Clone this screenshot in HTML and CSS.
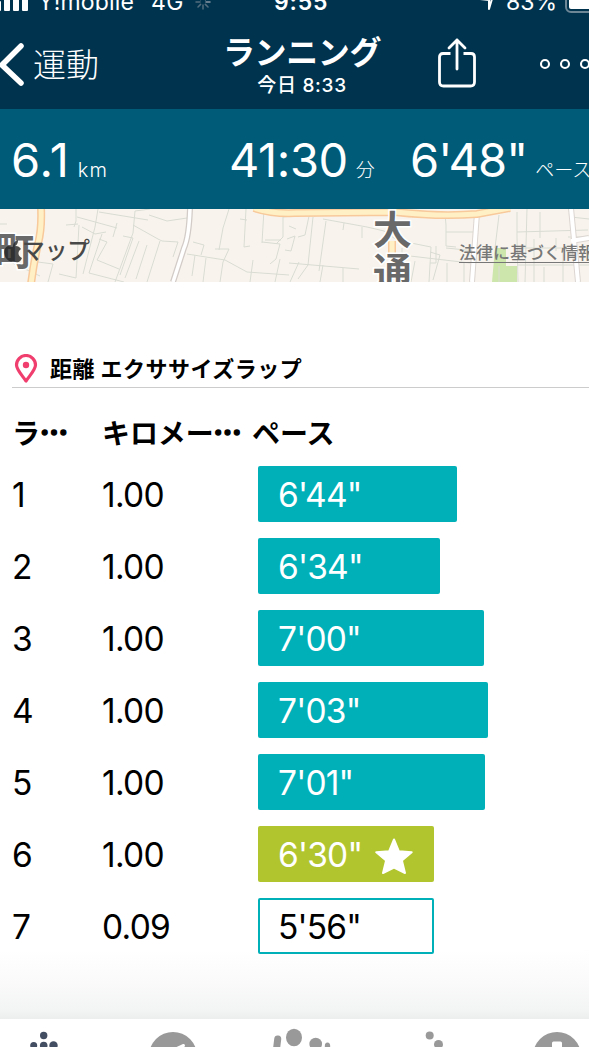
FILE: index.html
```html
<!DOCTYPE html>
<html lang="ja">
<head>
<meta charset="utf-8">
<title>ランニング</title>
<link rel="stylesheet" href="styles.css">
</head>
<body>
<div class="screen">
  <header class="top">
    <div class="status">
      <svg class="signal" width="30" height="24" viewBox="0 0 30 24" fill="#fff"><rect x="-4" y="13" width="5" height="10" rx="1"/><rect x="4" y="6" width="6" height="17" rx="1"/><rect x="13" y="3" width="6" height="20" rx="1"/><rect x="22" y="0" width="6" height="23" rx="1"/></svg>
      <span class="carrier">Y!mobile</span>
      <span class="network">4G</span>
      <svg class="spinner" width="16" height="16" viewBox="0 0 16 16" fill="none" stroke-width="1.5" stroke-linecap="round"><path stroke="#8797a3" d="M8 1v4M13 3l-2.6 2.6M15 8h-4"/><path stroke="#526d7e" d="M13 13l-2.6-2.6M8 15v-4M3 13l2.6-2.6M1 8h4M3 3l2.6 2.6"/></svg>
      <span class="clock">9:55</span>
      <svg class="location" width="18" height="22" viewBox="0 0 18 22" fill="none" stroke="#fff" stroke-width="2" stroke-linejoin="round"><path d="M15 3 1 10l9 1v9z"/></svg>
      <span class="percent">83%</span>
      <span class="battery"></span>
    </div>
    <nav class="nav">
      <svg class="back" width="25" height="44" viewBox="0 0 25 44" fill="none" stroke="#fff" stroke-width="5.5" stroke-linecap="round"><path d="M21 3 2 22 21 40"/></svg>
      <span class="back-label">運動</span>
      <div class="heading"><h1 class="title">ランニング</h1><p class="date">今日 8:33</p></div>
      <svg class="share" width="40" height="50" viewBox="0 0 40 50" fill="none" stroke="#fff" stroke-width="2.8" stroke-linecap="round" stroke-linejoin="round"><path stroke-linecap="butt" d="M13.500 15.500H6Q2.500 15.500 2.500 19V44Q2.500 48 6.500 48H33.500Q37.500 48 37.500 44V19Q37.500 15.500 34 15.500H26.500"/><path d="M20 31V2M12 10l8-8 8 8"/></svg>
      <svg class="more" width="51" height="14" viewBox="0 0 51 14" fill="none" stroke="#fff" stroke-width="2.100"><circle cx="7" cy="7" r="4"/><circle cx="27" cy="7" r="4"/><circle cx="47" cy="7" r="4"/></svg>
    </nav>
  </header>
  <section class="stats">
    <div class="stat stat-distance"><span class="value">6.1</span><span class="unit">km</span></div>
    <div class="stat stat-time"><span class="value">41:30</span><span class="unit">分</span></div>
    <div class="stat stat-pace"><span class="value">6'48"</span><span class="unit">ペース</span></div>
  </section>
  <svg class="map" width="589" height="73" viewBox="0 0 589 73">
    <rect width="589" height="73" fill="#f8f4ed"/>
    <path fill="#cde6ac" d="M495 39h11v18h11v16h-25z"/>
    <g class="lanes">
      <path d="M76 0v12l-2 6M98 0l-3 18-12 47M77 8l40 11M99 3l49 8M150 0l-15 2-2 22-18 49M133 16l25 14 4 2 16 1-5 15M117 14l-4 14M66 16l12-1M82 18l13 7 11-2M79 16l-3 53-17-4M99 30l8 3-10 18 22 9M123 27l10 2-13 37M139 32l-14 37M147 36l-11 34M160 32l-13 41M102 25l-13 39 35 9M149 6l18 6 20-3M187 45l38 6 22 12 42 3M193 33l11 3-3 10M195 46l-3 21M206 49l-3 24M215 40h14l-6 13-3 20M229 0l-6 19-4 22M246 0l-2 38 6-1M240 10l7 1M264 0l-2 34M265 31h16M262 33l18 2-4 15-6 5M283 8v20l-7 7M283 8l18-2M287 30l8-3-4 15-6-1M253 51l-3 22M280 50l-5 23M299 53l-9 20M0 15h7M8 52l32 15M38 53l15 2-5 18"/>
      <path d="M309 7l-4 19-7 2M313 8l-5 48-10 14M323 10l44 8 17 4 17 12M326 12l-7 50M344 14l-1 7M362 18v11M289 17l7 3M411 34l20 4-2 35M436 37v17h-6M430 43l10 3-7 25M445 4l1 12v21l10 1M446 23h31M446 39l30 3M499 6l-4 33M517 3v25l1 45M527 0l-2 73M517 23l71-2M540 3v26M518 39h49M518 56h71M534 30v43M544 58v15M556 29v13M568 28h21M563 40v33M571 8l18 2M578 53v20M289 54l70 6M323 56l-3 17M343 59v14M402 39v34M410 47l60 7M415 52l-4 21M447 54v19M464 54v19M499 57v16"/>
    </g>
    <g fill="none">
      <path stroke="#d2cbc7" stroke-width="6" d="M190-1Q189 28 184 39L173 73"/><path stroke="#fff" stroke-width="3.500" d="M190-1Q189 28 184 39L173 73"/>
      <path stroke="#dcd5d1" stroke-width="6" d="M477 4 472 73M571-1l7 74M571 32l18-3"/><path stroke="#fff" stroke-width="4" d="M477 4 472 73M571-1l7 74M571 32l18-3"/>
      <path stroke="#f8c99b" stroke-width="8" d="M41-2Q42 20 38 35 34 52 31 75M254-1Q272 5 295 4L395 3 Q440 8 477 5L510-1M392 32v15"/><path stroke="#fff0c5" stroke-width="5" d="M41-2Q42 20 38 35 34 52 31 75M254-1Q272 5 295 4L395 3 Q440 8 477 5L510-1M392 32v15"/>
    </g>
    <text class="town" x="-5" y="56">町</text>
    <text class="street" x="373" y="35">大</text>
    <text class="street" x="373" y="77">通</text>
    <g fill="#222" fill-opacity=".8"><path d="M18 31c0 4-2 6-5 7 0-4 2-6 5-7z"/><path d="M12 38c4-2 7-1 9 2-4 3-3 7 1 9-2 5-5 5-9 3-7 3-13-12-5-15 2 0 3 1 4 1z"/></g>
    <text class="provider" x="22" y="50" textLength="68" lengthAdjust="spacingAndGlyphs">マップ</text>
    <text class="legal" x="459" y="50">法律に基づく情報</text><path stroke="#777" d="M459 53.500H589"/>
  </svg>
  <main class="laps">
    <div class="section-title">
      <svg width="24" height="30" viewBox="0 0 24 30"><path fill="none" stroke="#f03f6e" stroke-width="3.200" stroke-linejoin="round" d="M12 27C7 20 2.500 15.500 2.500 11a9.500 9.500 0 0 1 19 0C21.500 15.500 17 20 12 27z"/><circle cx="12" cy="11" r="3.200" fill="#f03f6e"/></svg>
      <h2>距離 エクササイズラップ</h2>
    </div>
    <div class="row columns"><span>ラ<i class="dots">…</i></span><span>キロメー<i class="dots">…</i></span><span class="pace-label">ペース</span></div>
    <div class="row"><span>1</span><span>1.00</span><span class="bar" style="width:199px">6'44"</span></div>
    <div class="row"><span>2</span><span>1.00</span><span class="bar" style="width:182px">6'34"</span></div>
    <div class="row"><span>3</span><span>1.00</span><span class="bar" style="width:226px">7'00"</span></div>
    <div class="row"><span>4</span><span>1.00</span><span class="bar" style="width:230px">7'03"</span></div>
    <div class="row"><span>5</span><span>1.00</span><span class="bar" style="width:227px">7'01"</span></div>
    <div class="row"><span>6</span><span>1.00</span><span class="bar best" style="width:176px">6'30"<svg class="star" width="38" height="36" viewBox="0 0 38 36"><path fill="#fff" stroke="#fff" stroke-width="2" stroke-linejoin="round" d="M19 1.500 23.800 13.200 36.700 14.200 26.900 22.500 30 35 19 29.500 8 35 11.100 22.500 1.300 14.200 14.200 13.200z"/></svg></span></div>
    <div class="row"><span>7</span><span>0.09</span><span class="bar partial" style="width:176px">5'56"</span></div>
  </main>
  <footer class="tabs">
    <svg width="589" height="28" viewBox="0 0 589 28" fill="#999">
      <g fill="#434e62"><circle cx="43.700" cy="16.500" r="3.700"/><circle cx="33.700" cy="26.500" r="3.500"/><circle cx="43.700" cy="26.500" r="3.800"/><circle cx="53.500" cy="26.500" r="4.200"/></g>
      <circle cx="173" cy="37" r="24"/><path fill="#fff" d="M168 32l15-7q2-.500 2 1.500L180 39z"/>
      <rect x="273.500" y="16.500" width="7" height="20" rx="3.500" transform="rotate(7 277 26)"/><ellipse cx="294" cy="18.500" rx="8" ry="8.800"/><circle cx="315.700" cy="25" r="6.300"/><ellipse cx="327.500" cy="27" rx="2.700" ry="3.500"/>
      <circle cx="429.700" cy="16.500" r="4"/><circle cx="438.500" cy="25.500" r="4.500"/>
      <circle cx="557" cy="37" r="24"/><rect x="552" y="22.500" width="10" height="29" rx="1.500" fill="#fff"/>
    </svg>
  </footer>
</div>
</body>
</html>
```

FILE: styles.css
```css
* { box-sizing: border-box; }
body { margin: 0; overflow: hidden; }
h1, h2, p { margin: 0; }
.screen { width: 589px; height: 1047px; overflow: hidden; display: flex; flex-direction: column; background: #fff; font-family: Inter, "Noto Sans CJK JP", sans-serif; color: #000; }
.top { height: 109px; flex: none; background: #00334e; color: #fff; overflow: hidden; }
.status { height: 28px; margin-top: -12px; display: flex; align-items: center; font-size: 23px; line-height: 28px; white-space: nowrap; }
.status > * { flex: none; }
.signal { align-self: flex-start; }
.carrier { width: 107px; padding-left: 8px; letter-spacing: .15px; }
.network { width: 58px; padding-left: 14px; letter-spacing: .5px; }
.spinner { margin: 0 63px 0 0; }
.clock { width: 205px; font-weight: 600; letter-spacing: .8px; }
.location { margin-bottom: 5px; }
.percent { width: 59px; margin-left: 9px; }
.battery { width: 53px; height: 26px; margin-bottom: 5px; border: 2px solid #6d8796; border-radius: 6px; background: #fff content-box; padding: 2px; }
.nav { height: 93px; display: flex; align-items: flex-start; white-space: nowrap; }
.back { flex: none; margin-top: 27px; }
.back-label { width: 198px; padding: 23px 0 0 8px; font: 300 33px/48px "Noto Sans CJK JP", sans-serif; }
.heading { width: 158px; padding-top: 12px; text-align: center; }
.title { font: 700 32px/44px "Noto Sans CJK JP", sans-serif; letter-spacing: -.4px; }
.date { padding-top: 2px; font-size: 19px; line-height: 24px; font-weight: 500; letter-spacing: .7px; }
.share { flex: none; margin: 22px 0 0 56px; }
.more { flex: none; margin: 41px 0 0 61px; }
.stats { height: 100px; flex: none; display: grid; grid-template-columns: 218px 181px 190px; background: #005b78; color: #fff; white-space: nowrap; overflow: hidden; }
.stat { display: flex; align-items: baseline; padding: 22px 0 0 11px; }
.value { font-size: 47px; line-height: 58px; font-weight: 400; letter-spacing: -.4px; }
.stat-distance .value { letter-spacing: .9px; }
.unit { font: 300 19px/24px Inter, "Noto Sans CJK JP", sans-serif; margin-left: 8px; }
.stat-pace .value { letter-spacing: -.9px; }
.stat-distance .unit { font-size: 20px; letter-spacing: 1px; }
.map { display: block; flex: none; }
.lanes path { fill: none; stroke: #d9dcd3; stroke-width: 1; }
.map text { font-family: "Noto Sans CJK JP", sans-serif; }
.town, .street { font-size: 39px; font-weight: 700; fill: #696969; stroke: #fff; stroke-width: 3px; paint-order: stroke; }
.provider { font-size: 24px; font-weight: 500; fill: #484848; }
.legal { font-size: 17px; font-weight: 500; fill: #777; }
.laps { height: 737px; flex: none; padding: 68px 0 0 12px; background: linear-gradient(#fff 668px, #fafafa 701px, #f3f4f4 728px, #eceeee 737px); }
.section-title { height: 38px; display: flex; align-items: center; gap: 12px; padding-left: 2px; border-bottom: 1px solid #ccc; }
.section-title h2 { margin-top: -4px; font: 700 22px/32px "Noto Sans CJK JP", sans-serif; letter-spacing: .5px; }
.row { display: grid; grid-template-columns: 90px 156px auto; justify-content: start; height: 56px; margin-bottom: 16px; align-items: center; font-size: 33.5px; line-height: 54px; letter-spacing: -.7px; white-space: nowrap; }
.row:not(.columns) > span:not(.bar) { padding-top: 2px; }
.columns { height: 48px; margin: 20px 0 10px; font: 700 28px/48px "Noto Sans CJK JP", sans-serif; letter-spacing: -.1px; }
.dots { font-style: normal; font-weight: 900; -webkit-text-stroke: 1.3px #000; }
.pace-label { margin-left: -6px; }
.bar { display: flex; align-items: center; height: 56px; padding: 2px 0 0 20px; background: #00b0b9; color: #fff; border-radius: 2px; letter-spacing: -.8px; }
.best { background: #b1c52f; }
.star { margin: 2px 0 0 13px; }
.partial { background: #fff; border: 2px solid #00b0b9; color: #000; padding-left: 18px; }
.tabs { height: 28px; flex: none; background: #fff; }
.tabs svg { display: block; }
```
